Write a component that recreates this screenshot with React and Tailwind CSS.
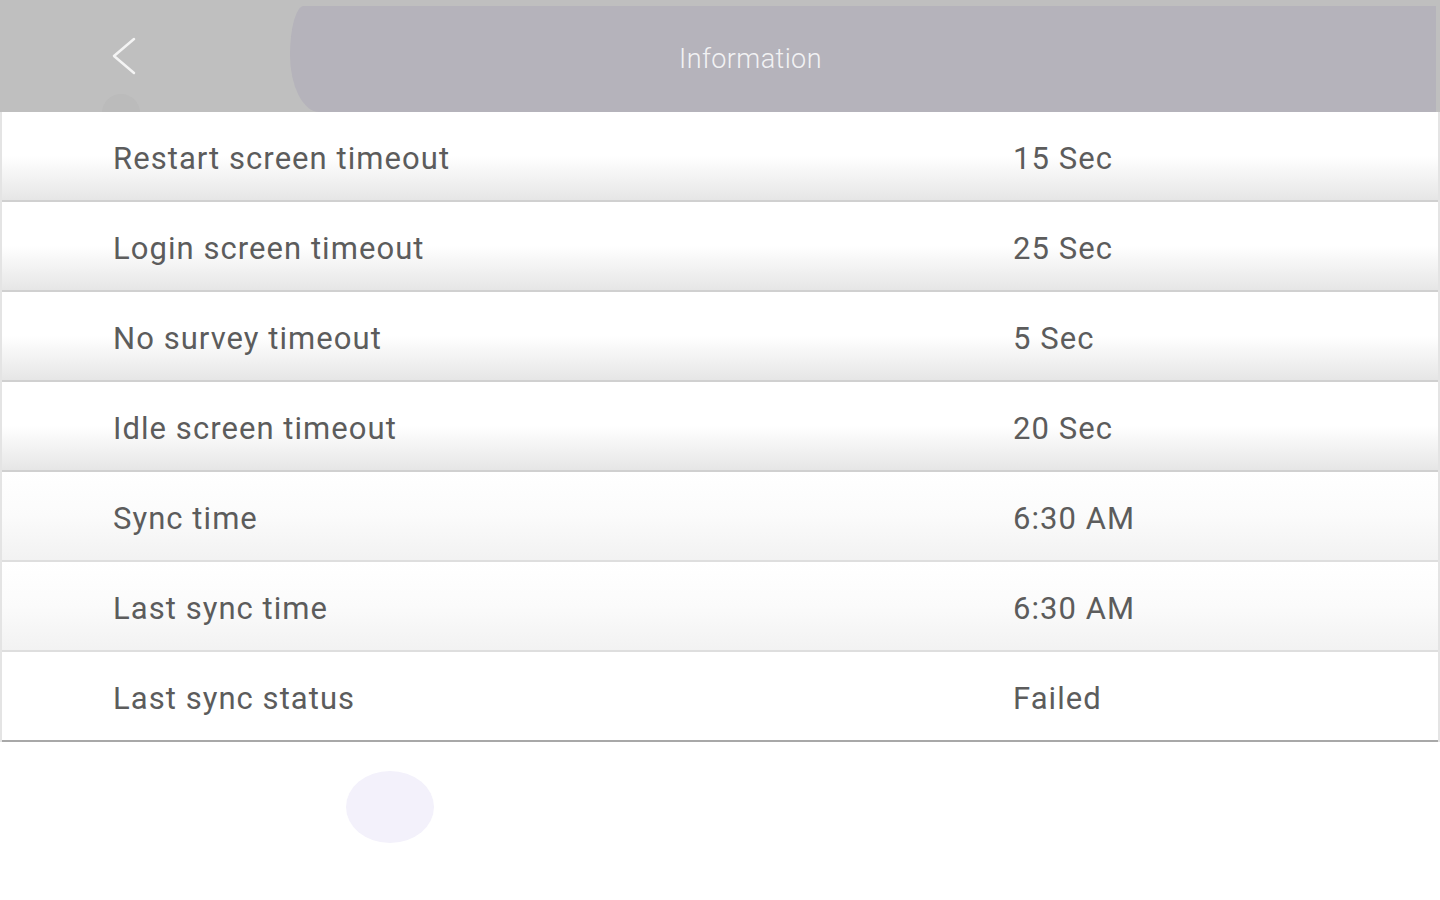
import React from "react";

const rows = [
  ["Restart screen timeout", "15 Sec"],
  ["Login screen timeout", "25 Sec"],
  ["No survey timeout", "5 Sec"],
  ["Idle screen timeout", "20 Sec"],
  ["Sync time", "6:30 AM"],
  ["Last sync time", "6:30 AM"],
  ["Last sync status", "Failed"],
];

export default function App() {
  return (
    <div className="w-[1440px] h-[900px] bg-white overflow-hidden" style={{ fontFamily: "Roboto, 'Noto Sans', sans-serif" }}>
      <header className="relative h-[112px] bg-[#bfbfbf] overflow-hidden">
        <div className="absolute left-[290px] top-[6px] right-[4px] bottom-0 rounded-tl-[14px_50px] rounded-bl-[30px_58px] bg-[#b5b3bb]" />
        <div className="absolute left-[102px] top-[94px] w-[38px] h-[38px] rounded-full bg-[#bbbbbb]" />
        <div className="relative h-full flex items-center">
          <div className="w-[111px]" />
          <svg width="26" height="38" viewBox="0 0 26 38" className="-mt-[1px]">
            <path d="M23 2 L3 19 L23 36" fill="none" stroke="#f4f4f4" strokeWidth="2.5" strokeLinecap="round" strokeLinejoin="round" />
          </svg>
          <div className="flex-1 flex justify-center">
            <span className="text-[27px] font-light tracking-[0.4px] text-[#f2f2f4] mt-[6px] ml-[-76px]">Information</span>
          </div>
        </div>
      </header>
      <div className="border-l-2 border-r-2 border-[#e4e4e4]">
        {rows.map(([label, value], i) => (
          <div
            key={label}
            className={
              i === rows.length - 1
                ? "h-[90px] flex items-center bg-white border-b-2 border-[#a8a8a8]"
                : i < 4
                ? "h-[90px] flex items-center bg-gradient-to-b from-white via-white to-[#e6e6e6] border-b-2 border-[#d0d0d0]"
                : "h-[90px] flex items-center bg-gradient-to-b from-white via-[#fbfbfb] to-[#f2f2f2] border-b-2 border-[#dedede]"
            }
          >
            <span className="w-[1011px] pl-[111px] text-[31px] tracking-[1.05px] text-[#5c5c5c] mt-[6px]">{label}</span>
            <span className="text-[31px] tracking-[1.05px] text-[#5c5c5c] mt-[6px]">{value}</span>
          </div>
        ))}
      </div>
      <div className="pl-[346px] pt-[29px]">
        <div className="w-[88px] h-[72px] rounded-[50%] bg-[#f3f1fb]" />
      </div>
    </div>
  );
}
